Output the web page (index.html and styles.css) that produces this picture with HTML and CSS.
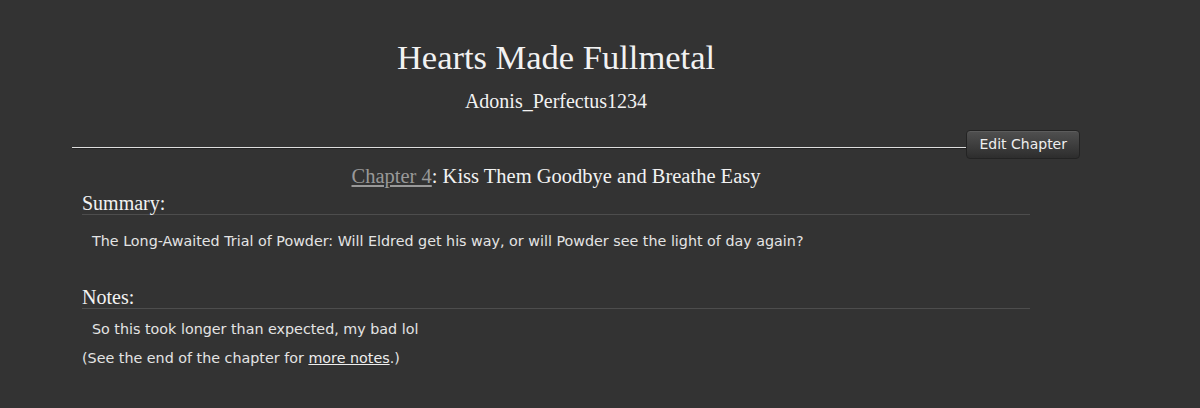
FILE: index.html
```html
<!DOCTYPE html>
<html lang="en">

<head>
    <meta charset="UTF-8">
    <title>Hearts Made Fullmetal - Chapter 4</title>
    <link rel="stylesheet" href="styles.css">
</head>

<body>

    <div class="work">
        <div class="preface">
            <h2 class="title">Hearts Made Fullmetal</h2>
            <h3 class="byline">Adonis_Perfectus1234</h3>
        </div>

        <div class="divider-row">
            <div class="divider"></div>
            <a class="btn-edit" href="#">Edit Chapter</a>
        </div>

        <div class="chapter">
            <h3 class="chapter-title"><a href="#">Chapter 4</a>: Kiss Them Goodbye and Breathe Easy</h3>

            <div class="module">
                <h3 class="heading">Summary:</h3>
                <p class="userstuff summary-text">The Long-Awaited Trial of Powder: Will Eldred get his way, or will Powder see the light of day again?</p>
            </div>

            <div class="module notes">
                <h3 class="heading">Notes:</h3>
                <p class="userstuff">So this took longer than expected, my bad lol</p>
                <p class="jump">(See the end of the chapter for <a href="#">more notes</a>.)</p>
            </div>
        </div>
    </div>

</body>
</html>
```

FILE: styles.css
```css
body {
    margin: 0;
    background-color: #333;
    color: #eee;
    font-family: "DejaVu Sans", Verdana, sans-serif;
    font-size: 14.3px;
}

.work {
    padding: 0 120px 0 72px;
}

.preface {
    width: 948px;
    margin-left: 10px;
    text-align: center;
    padding-top: 37px;
}

.title,
.byline,
.chapter-title,
.heading {
    font-family: "Liberation Serif", Georgia, serif;
    font-weight: normal;
    color: #f2f2f2;
    margin: 0;
}

.title {
    font-size: 34.5px;
    line-height: 40px;
}

.byline {
    font-size: 20px;
    line-height: 24px;
    margin-top: 12px;
}

/* line + edit button */
.divider-row {
    display: flex;
    align-items: flex-start;
    margin-top: 17px;
}

.divider {
    flex: 1;
    height: 1px;
    margin-top: 17px;
    background-color: #ddd;
    border-bottom: 1px solid #222;
}

.btn-edit {
    display: block;
    padding: 0 12px;
    height: 27px;
    line-height: 26px;
    font-size: 14px;
    color: #eee;
    text-decoration: none;
    background: linear-gradient(#505050, #2d2d2d);
    border: 1px solid #232323;
    border-radius: 4px;
    box-shadow: inset 0 1px 0 #5c5c5c;
}

.chapter {
    width: 948px;
    margin-left: 10px;
}

.chapter-title {
    text-align: center;
    font-size: 20.5px;
    line-height: 24px;
    margin-top: 5px;
}

.chapter-title a {
    color: #999;
    text-decoration: underline;
}

.module {
    margin-top: 4px;
}

.notes {
    margin-top: 35px;
}

.heading {
    font-size: 20px;
    line-height: 22px;
    border-bottom: 1px solid #4d4d4d;
}

.userstuff {
    margin: 10px 0 0 10px;
    line-height: 20px;
    color: #e4e4e4;
}

.summary-text {
    margin-top: 16px;
}

.jump {
    margin: 9px 0 0;
    line-height: 20px;
    color: #e4e4e4;
}

.jump a {
    color: #eee;
}
```
